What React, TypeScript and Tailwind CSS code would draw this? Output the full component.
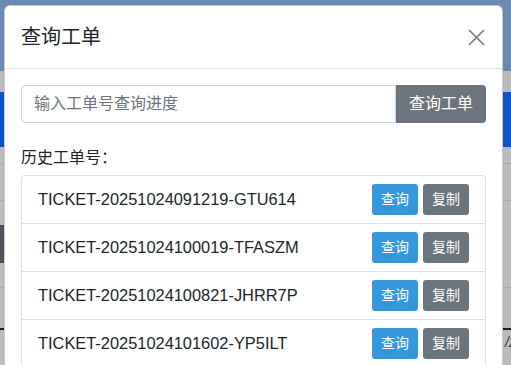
const tickets = [
  'TICKET-20251024091219-GTU614',
  'TICKET-20251024100019-TFASZM',
  'TICKET-20251024100821-JHRR7P',
  'TICKET-20251024101602-YP5ILT',
];

const cjk = "font-['Liberation_Sans','Noto_Sans_CJK_SC',sans-serif]";

const CloseIcon = () => (
  <svg width="17" height="17" viewBox="0 0 17 17" fill="none">
    <path d="M1 1 L16 16 M16 1 L1 16" stroke="#7a7a7a" strokeWidth="1.6" />
  </svg>
);

export default function App() {
  return (
    <div className={`relative h-[365px] w-[511px] overflow-hidden bg-[#bbbbbb] ${cjk}`}>
      {/* dimmed page behind the modal */}
      <div className="flex flex-col">
        <div className="h-[71px] bg-[#6a89b0]" />
        <div className="h-[21px] bg-[#bababa]" />
        <div className="h-[55px] bg-[#0c53c3]" />
        <div className="h-[16px]" />
        <div className="h-[37px] border-t border-[#a9a9a9]" />
        <div className="h-[87px] border-t border-[#a9a9a9] pt-[24px]">
          <div className="h-[38px] w-[20px] bg-[#4b5257]" />
        </div>
        <div className="h-[41px] border-t border-[#a9a9a9]" />
        <div className="h-[37px] border-t-2 border-[#1d1d1d] pl-[505px] pt-[2px] text-[14px] italic text-[#333]">
          /2
        </div>
      </div>

      {/* modal */}
      <div className="absolute left-[4px] top-[5px] w-[499px] rounded-[6px] border border-[#00000033] bg-white">
        <div className="flex items-center justify-between border-b border-[#dee2e6] px-4 py-4">
          <h5 className="text-[20px] leading-[30px] text-[#212529]">查询工单</h5>
          <button className="mr-[1px] flex h-[30px] items-center">
            <CloseIcon />
          </button>
        </div>

        <div className="px-4 pt-4">
          <div className="flex h-[38px]">
            <input
              type="text"
              placeholder="输入工单号查询进度"
              className={`min-w-0 flex-1 rounded-l-[4px] border border-[#ced4da] px-3 text-[16px] text-[#495057] outline-none placeholder:text-[#6c757d] ${cjk}`}
            />
            <button className="w-[90px] rounded-r-[4px] bg-[#6c757d] text-[16px] text-white">
              查询工单
            </button>
          </div>

          <div className="mt-[23px] text-[16px] leading-[24px] text-[#212529]">历史工单号：</div>

          <ul className="mt-[5px] rounded-t-[4px] border border-[#dfdfdf] border-b-0">
            {tickets.map((t) => (
              <li
                key={t}
                className="flex h-[48px] items-center justify-between border-b border-[#dfdfdf] px-4"
              >
                <span className="text-[16.4px] text-[#212529]">{t}</span>
                <div className="flex gap-[5px]">
                  <button className="h-[31px] w-[46px] rounded-[3px] bg-[#3498db] text-[14px] text-white">
                    查询
                  </button>
                  <button className="h-[31px] w-[46px] rounded-[3px] bg-[#6c757d] text-[14px] text-white">
                    复制
                  </button>
                </div>
              </li>
            ))}
          </ul>
        </div>
      </div>
    </div>
  );
}
